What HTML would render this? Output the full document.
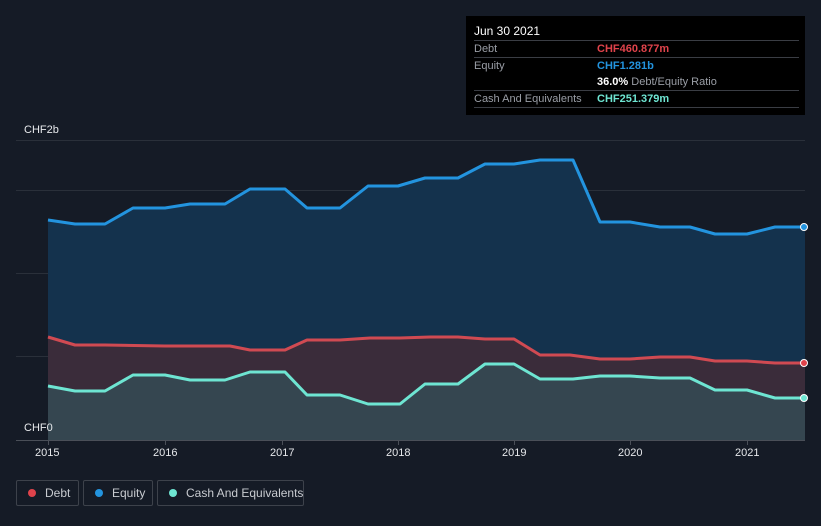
<!DOCTYPE html>
<html><head><meta charset="utf-8"><style>
html,body{margin:0;width:821px;height:526px;overflow:hidden}
body{background:#151b26;font-family:"Liberation Sans",sans-serif;position:relative}
.tt{position:absolute;left:466px;top:16px;width:339px;height:99px;background:#000;}
.tt .h{position:absolute;left:8px;top:8px;color:#fff;font-size:12px}
.row{position:absolute;left:8px;width:325px;border-top:1px solid #3a3d44;height:16px;line-height:16px;font-size:11px;color:#9a9ea6;white-space:nowrap}
.row span{position:absolute;left:123px;top:0;font-weight:bold}
.lg{position:absolute;top:480px;height:26px;border:1px solid #3d424b;border-radius:2px;color:#c8cbd0;font-size:12px;line-height:24px;box-sizing:border-box;white-space:nowrap}
.lg i{position:absolute;left:11px;top:8px;width:8px;height:8px;border-radius:50%}
.ax{position:absolute;top:447px;color:#e6e8eb;font-size:11px}
</style></head><body>
<svg width="821" height="526" style="position:absolute;left:0;top:0">
<g stroke="#2a303a" stroke-width="1">
<line x1="16" y1="140.5" x2="805" y2="140.5"/><line x1="16" y1="190.5" x2="805" y2="190.5"/>
<line x1="16" y1="273.5" x2="805" y2="273.5"/><line x1="16" y1="356.5" x2="805" y2="356.5"/>
</g>
<path d="M48,220 L75,224 L105,224 L133,208 L165,208 L190,204 L225,204 L250,189 L285,189 L307,208 L340,208 L368,186 L398,186 L425,178 L458,178 L485,164 L514,164 L540,160 L573,160 L600,222 L630,222 L660,227 L690,227 L715,234 L747,234 L775,227 L805,227 L805,440 L48,440Z" fill="#14324d"/>
<path d="M48,337 L75,345 L105,345 L165,346 L230,346 L250,350 L285,350 L307,340 L340,340 L370,338 L400,338 L430,337 L458,337 L485,339 L514,339 L540,355 L570,355 L600,359 L630,359 L660,357 L690,357 L715,361 L747,361 L775,363 L805,363 L805,440 L48,440Z" fill="#3a2c3a"/>
<path d="M48,386 L75,391 L105,391 L133,375 L165,375 L190,380 L225,380 L250,372 L285,372 L307,395 L340,395 L368,404 L400,404 L425,384 L458,384 L485,364 L514,364 L540,379 L573,379 L600,376 L630,376 L660,378 L690,378 L715,390 L747,390 L775,398 L805,398 L805,440 L48,440Z" fill="#354650"/>
<g fill="none" stroke-width="3" stroke-linejoin="round">
<path d="M48,220 L75,224 L105,224 L133,208 L165,208 L190,204 L225,204 L250,189 L285,189 L307,208 L340,208 L368,186 L398,186 L425,178 L458,178 L485,164 L514,164 L540,160 L573,160 L600,222 L630,222 L660,227 L690,227 L715,234 L747,234 L775,227 L805,227" stroke="#2394df"/>
<path d="M48,337 L75,345 L105,345 L165,346 L230,346 L250,350 L285,350 L307,340 L340,340 L370,338 L400,338 L430,337 L458,337 L485,339 L514,339 L540,355 L570,355 L600,359 L630,359 L660,357 L690,357 L715,361 L747,361 L775,363 L805,363" stroke="#d04a52"/>
<path d="M48,386 L75,391 L105,391 L133,375 L165,375 L190,380 L225,380 L250,372 L285,372 L307,395 L340,395 L368,404 L400,404 L425,384 L458,384 L485,364 L514,364 L540,379 L573,379 L600,376 L630,376 L660,378 L690,378 L715,390 L747,390 L775,398 L805,398" stroke="#6ee5d2"/>
</g>
<circle cx="804" cy="227" r="3.5" fill="#2394df" stroke="#fff" stroke-width="1"/>
<circle cx="804" cy="363" r="3.5" fill="#e0434b" stroke="#fff" stroke-width="1"/>
<circle cx="804" cy="398" r="3.5" fill="#6ee5d2" stroke="#fff" stroke-width="1"/>
<line x1="16" y1="440.5" x2="805" y2="440.5" stroke="#4a4f58"/>
<g stroke="#4a4f58"><line x1="48.5" y1="440" x2="48.5" y2="445"/><line x1="165.5" y1="440" x2="165.5" y2="445"/><line x1="282.5" y1="440" x2="282.5" y2="445"/><line x1="398.5" y1="440" x2="398.5" y2="445"/><line x1="514.5" y1="440" x2="514.5" y2="445"/><line x1="630.5" y1="440" x2="630.5" y2="445"/><line x1="747.5" y1="440" x2="747.5" y2="445"/></g>
</svg>
<div style="position:absolute;left:24px;top:124px;color:#e6e8eb;font-size:11px">CHF2b</div>
<div style="position:absolute;left:24px;top:422px;color:#e6e8eb;font-size:11px">CHF0</div>
<div class="ax" style="left:35px">2015</div><div class="ax" style="left:153px">2016</div><div class="ax" style="left:270px">2017</div><div class="ax" style="left:386px">2018</div><div class="ax" style="left:502px">2019</div><div class="ax" style="left:618px">2020</div><div class="ax" style="left:735px">2021</div>
<div class="tt"><div class="h">Jun 30 2021</div>
<div class="row" style="top:24px">Debt<span style="color:#e0434b">CHF460.877m</span></div>
<div class="row" style="top:41px">Equity<span style="color:#2394df">CHF1.281b</span></div>
<div style="position:absolute;left:131px;top:58px;line-height:16px;font-size:11px;color:#9a9ea6;white-space:nowrap"><b style="color:#fff">36.0%</b> Debt/Equity Ratio</div>
<div class="row" style="top:74px">Cash And Equivalents<span style="color:#6ee5d2">CHF251.379m</span></div>
<div style="position:absolute;left:8px;top:91px;width:325px;border-top:1px solid #3a3d44"></div>
</div>
<div class="lg" style="left:16px;width:63px"><i style="background:#e0434b"></i><span style="position:absolute;left:28px">Debt</span></div>
<div class="lg" style="left:83px;width:70px"><i style="background:#2394df"></i><span style="position:absolute;left:28px">Equity</span></div>
<div class="lg" style="left:157px;width:147px"><i style="background:#6ee5d2"></i><span style="position:absolute;left:28px">Cash And Equivalents</span></div>
</body></html>
